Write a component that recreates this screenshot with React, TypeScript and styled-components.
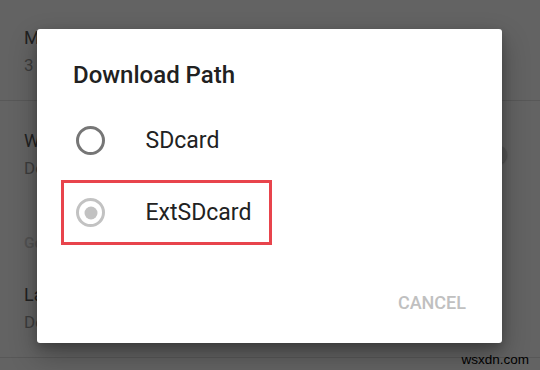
import React from 'react';
import styled, { createGlobalStyle } from 'styled-components';

const GlobalStyle = createGlobalStyle`
  html, body {
    margin: 0;
    padding: 0;
    background: #636363;
  }
  body {
    font-family: Roboto, "Noto Sans", "Liberation Sans", sans-serif;
  }
`

const Screen = styled.div`
  position: relative;
  width: 540px;
  height: 370px;
  overflow: hidden;
  background: #ffffff;
`

const SettingsList = styled.div`
  display: flex;
  flex-direction: column;
`

const Item = styled.div<{ $top?: number }>`
  display: flex;
  align-items: center;
  padding: ${p => p.$top ?? 28}px 33px 24px 24px;
`

const ItemText = styled.div`
  display: flex;
  flex-direction: column;
  gap: 4px;
  flex: 1;
`

const ItemTitle = styled.div`
  font-size: 18px;
  line-height: 24px;
  color: #575757;
`

const ItemSummary = styled.div`
  font-size: 17px;
  line-height: 22px;
  color: #9c9c9c;
`

const Category = styled.div`
  padding: 30px 24px 2px;
  font-size: 15.5px;
  line-height: 20px;
  font-weight: 500;
  color: #d2d2d2;
`

const Divider = styled.div`
  height: 1px;
  background: #e2e2e2;
`

const Switch = styled.div`
  display: flex;
  align-items: center;
  justify-content: flex-end;
  width: 36px;
  height: 20px;
  border-radius: 10px;
  background: linear-gradient(to right, #d8d8d8 0 70%, transparent 70%);
`

const Thumb = styled.div`
  width: 19px;
  height: 19px;
  border-radius: 50%;
  background: #dcdcdc;
  box-shadow: 0 1px 2px rgba(0, 0, 0, 0.3);
`

const Scrim = styled.div`
  position: absolute;
  inset: 0;
  background: rgba(0, 0, 0, 0.612);
`

const Dialog = styled.div`
  position: absolute;
  left: 37px;
  top: 29px;
  width: 465px;
  height: 314px;
  box-sizing: border-box;
  display: flex;
  flex-direction: column;
  padding-top: 30px;
  background: #ffffff;
  border-radius: 3px;
  box-shadow: 0 12px 28px rgba(0, 0, 0, 0.3), 0 4px 10px rgba(0, 0, 0, 0.2);
`

const DialogTitle = styled.h2`
  margin: 0 0 13.5px;
  padding: 0 36px;
  font-size: 24px;
  line-height: 32px;
  font-weight: 500;
  color: #212121;
`

const Options = styled.div`
  display: flex;
  flex-direction: column;
`

const Option = styled.label<{ $marked?: boolean }>`
  position: relative;
  display: flex;
  align-items: center;
  gap: 40.5px;
  height: 72px;
  padding-left: 39px;

  &::after {
    content: '';
    display: ${p => (p.$marked ? 'block' : 'none')};
    position: absolute;
    left: 24px;
    top: 3.5px;
    width: 211px;
    height: 65px;
    box-sizing: border-box;
    border: 3px solid #e8444c;
  }
`

const Radio = styled.span<{ $checked?: boolean }>`
  position: relative;
  width: 29px;
  height: 29px;
  box-sizing: border-box;
  border-radius: 50%;
  border: 3px solid ${p => (p.$checked ? '#c2c2c2' : '#767676')};

  &::after {
    content: '';
    display: ${p => (p.$checked ? 'block' : 'none')};
    position: absolute;
    left: 50%;
    top: 50%;
    width: 13px;
    height: 13px;
    border-radius: 50%;
    background: #c2c2c2;
    transform: translate(-50%, -50%);
  }
`

const OptionLabel = styled.span`
  font-size: 23px;
  line-height: 30px;
  color: #222222;
`

const Actions = styled.div`
  margin-top: auto;
  display: flex;
  justify-content: flex-end;
  padding: 0 36px 28px;
`

const TextButton = styled.button`
  border: 0;
  padding: 0;
  background: none;
  font-family: inherit;
  font-size: 18px;
  line-height: 24px;
  font-weight: 500;
  color: #c0c0c0;
`

const Watermark = styled.div`
  position: absolute;
  right: 11px;
  bottom: 3px;
  font-family: "Liberation Sans", Arial, sans-serif;
  font-size: 13.5px;
  line-height: 15px;
  color: #000000;
`

const paths = [
  { name: 'SDcard', checked: false },
  { name: 'ExtSDcard', checked: true },
];

const App: React.FC = () => {
  return (
    <>
      <GlobalStyle />
      <Screen>
        <SettingsList>
          <Item $top={26}>
            <ItemText>
              <ItemTitle>Max downloads</ItemTitle>
              <ItemSummary>3</ItemSummary>
            </ItemText>
          </Item>
          <Divider />
          <Item>
            <ItemText>
              <ItemTitle>Wi-Fi only</ItemTitle>
              <ItemSummary>Download over Wi-Fi only</ItemSummary>
            </ItemText>
            <Switch>
              <Thumb />
            </Switch>
          </Item>
          <Category>General</Category>
          <Item>
            <ItemText>
              <ItemTitle>Language</ItemTitle>
              <ItemSummary>Default</ItemSummary>
            </ItemText>
          </Item>
          <Divider />
        </SettingsList>

        <Scrim />

        <Dialog>
          <DialogTitle>Download Path</DialogTitle>
          <Options>
            {paths.map(p => (
              <Option key={p.name} $marked={p.checked}>
                <Radio $checked={p.checked} />
                <OptionLabel>{p.name}</OptionLabel>
              </Option>
            ))}
          </Options>
          <Actions>
            <TextButton>CANCEL</TextButton>
          </Actions>
        </Dialog>

        <Watermark>wsxdn.com</Watermark>
      </Screen>
    </>
  );
}

export default App;
